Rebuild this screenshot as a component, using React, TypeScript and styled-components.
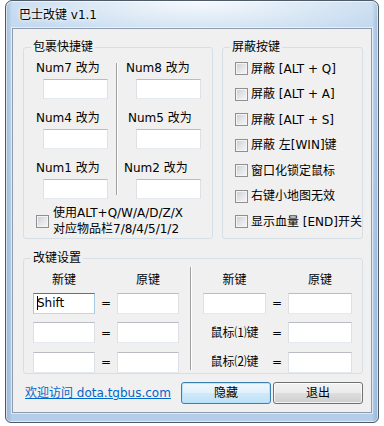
import styled, { createGlobalStyle } from 'styled-components';

const GlobalStyle = createGlobalStyle`
  html, body {
    margin: 0;
    padding: 0;
    background: #ffffff;
  }
  body {
    font-family: "DejaVu Sans", "Noto Sans CJK SC", sans-serif;
    font-size: 12px;
    color: #000000;
  }
`;

const Screen = styled.div`
  width: 384px;
  height: 426px;
  overflow: hidden;
  background: #ffffff;
`;

const Window = styled.div`
  box-sizing: border-box;
  margin-left: 5px;
  width: 374px;
  height: 423px;
  display: flex;
  flex-direction: column;
  padding: 0 6px 9px 6px;
  border: 1px solid #4f5a68;
  border-radius: 7px 7px 6px 6px;
  background:
    radial-gradient(ellipse 55% 40px at 52% 0%, rgba(255, 255, 255, 0.85), rgba(255, 255, 255, 0) 100%),
    linear-gradient(90deg, rgba(90, 130, 180, 0.35) 0px, rgba(90, 130, 180, 0) 6px, rgba(90, 130, 180, 0) 366px, rgba(90, 130, 180, 0.35) 372px),
    linear-gradient(180deg, #c6dbf0 0%, #b9d1ea 60%, #b4cde8 100%);
  box-shadow: inset 0 0 0 1px rgba(255, 255, 255, 0.6);
`;

const TitleBar = styled.div`
  height: 27px;
  display: flex;
  align-items: center;
  padding-left: 7px;
  font-size: 12px;
  line-height: 14px;
  text-shadow: 0 0 6px #ffffff, 0 0 3px #ffffff;
`;

const Client = styled.div`
  box-sizing: border-box;
  width: 360px;
  height: 385px;
  display: flex;
  flex-direction: column;
  padding: 11px 8px 0 10px;
  border: 1px solid #8e9cae;
  background: #f0f0f0;
  box-shadow: 0 0 0 1px rgba(255, 255, 255, 0.55);
`;

const TopRow = styled.div`
  display: flex;
  gap: 9px;
`;

const Group = styled.fieldset<{ $width: number; $height: number }>`
  box-sizing: border-box;
  width: ${(p) => p.$width}px;
  height: ${(p) => p.$height}px;
  margin: 0;
  padding: 0;
  min-width: 0;
  border: 1px solid #d5dfe5;
  border-radius: 3px;
`;

const Legend = styled.legend`
  margin-left: 7px;
  padding: 0 2px;
  font-size: 12px;
  line-height: 14px;
`;

const Columns = styled.div`
  display: flex;
  align-items: flex-start;
`;

const KeyColumn = styled.div<{ $width: number }>`
  width: ${(p) => p.$width}px;
  display: flex;
  flex-direction: column;
  gap: 12px;
  padding-top: 7px;
`;

const KeyCell = styled.div`
  display: flex;
  flex-direction: column;
  gap: 4px;
`;

const KeyLabel = styled.div<{ $indent: number }>`
  padding-left: ${(p) => p.$indent}px;
  line-height: 14px;
  white-space: nowrap;
`;

const TextBox = styled.div<{ $width: number; $height: number; $focused?: boolean }>`
  box-sizing: border-box;
  width: ${(p) => p.$width}px;
  height: ${(p) => p.$height}px;
  display: flex;
  align-items: center;
  padding-left: 3px;
  background: #ffffff;
  border: 1px solid;
  border-color: ${(p) =>
    p.$focused ? '#3d7bad #a4c9e3 #b7d9ed #a4c9e3' : '#b9bdc3 #dde1e6 #e3e9ef #dde1e6'};
  line-height: 14px;
`;

const KeyBox = styled(TextBox)`
  margin-left: 19px;
`;

const Caret = styled.span`
  display: inline-block;
  width: 1px;
  height: 14px;
  margin-right: -1px;
  background: #000000;
`;

const VDivider = styled.div<{ $top: number; $height: number }>`
  width: 1px;
  height: ${(p) => p.$height}px;
  margin-top: ${(p) => p.$top}px;
  background: #a0a0a0;
  box-shadow: 1px 0 0 #ffffff;
`;

const Check = styled.span`
  box-sizing: border-box;
  flex: none;
  width: 13px;
  height: 13px;
  border: 1px solid #8f8f8f;
  background: linear-gradient(135deg, #c8ccd2 0%, #e6e7e9 55%, #f6f6f6 100%);
  box-shadow: inset 0 0 0 1px #f4f4f4;
`;

const BagCheckRow = styled.div`
  display: flex;
  align-items: center;
  gap: 4px;
  margin-top: 6px;
  padding-left: 12px;
`;

const TwoLines = styled.div`
  line-height: 16px;
  white-space: nowrap;
`;

const BlockList = styled.div`
  display: flex;
  flex-direction: column;
  padding-top: 2px;
  overflow: hidden;
`;

const BlockRow = styled.div`
  height: 25.5px;
  display: flex;
  align-items: center;
  gap: 3px;
  padding-left: 12px;
  line-height: 14px;
  white-space: nowrap;
`;

const MapRow = styled.div`
  display: flex;
  align-items: flex-start;
  padding-top: 5px;
`;

const MapHalf = styled.div<{ $left: number; $cols: string }>`
  margin-left: ${(p) => p.$left}px;
  display: grid;
  grid-template-columns: ${(p) => p.$cols};
  grid-template-rows: 14px repeat(3, 21px);
  row-gap: 8.5px;
  align-items: center;
  & > :nth-child(-n + 3) {
    margin-bottom: -5.5px;
  }
`;

const Cell = styled.div`
  text-align: center;
  line-height: 14px;
  white-space: nowrap;
`;

const Footer = styled.div`
  display: flex;
  align-items: center;
  margin-top: 8px;
  padding-left: 2px;
`;

const Link = styled.a`
  color: #0066cc;
  text-decoration: underline;
  line-height: 14px;
  white-space: nowrap;
`;

const Buttons = styled.div`
  margin-left: auto;
  display: flex;
  gap: 2px;
`;

const Button = styled.div<{ $default?: boolean }>`
  box-sizing: border-box;
  width: 90px;
  height: 22px;
  display: flex;
  align-items: center;
  justify-content: center;
  border-radius: 3px;
  border: 1px solid ${(p) => (p.$default ? '#3c7fb1' : '#707070')};
  background: ${(p) =>
    p.$default
      ? 'linear-gradient(180deg, #eef7fd 0%, #e1f1fc 48%, #cfe9fa 52%, #bfe1f7 100%)'
      : 'linear-gradient(180deg, #f2f2f2 0%, #ebebeb 48%, #dddddd 52%, #cfcfcf 100%)'};
  box-shadow: inset 0 0 0 1px ${(p) => (p.$default ? 'rgba(180, 225, 250, 0.9)' : 'rgba(255, 255, 255, 0.75)')};
  line-height: 14px;
`;

const bagKeys = [
  [
    { label: 'Num7 改为', indent: 12 },
    { label: 'Num4 改为', indent: 12 },
    { label: 'Num1 改为', indent: 12 },
  ],
  [
    { label: 'Num8 改为', indent: 9 },
    { label: 'Num5 改为', indent: 11 },
    { label: 'Num2 改为', indent: 7 },
  ],
];

const blockedKeys = [
  '屏蔽 [ALT + Q]',
  '屏蔽 [ALT + A]',
  '屏蔽 [ALT + S]',
  '屏蔽 左[WIN]键',
  '窗口化锁定鼠标',
  '右键小地图无效',
  '显示血量 [END]开关',
];

export default function App() {
  return (
    <Screen>
      <GlobalStyle />
      <Window>
        <TitleBar>巴士改键 v1.1</TitleBar>
        <Client>
          <TopRow>
            <Group $width={190} $height={199}>
              <Legend>包裹快捷键</Legend>
              <Columns>
                <KeyColumn $width={92}>
                  {bagKeys[0].map((k) => (
                    <KeyCell key={k.label}>
                      <KeyLabel $indent={k.indent}>{k.label}</KeyLabel>
                      <KeyBox $width={65} $height={20} />
                    </KeyCell>
                  ))}
                </KeyColumn>
                <VDivider $top={9} $height={132} />
                <KeyColumn $width={95}>
                  {bagKeys[1].map((k) => (
                    <KeyCell key={k.label}>
                      <KeyLabel $indent={k.indent}>{k.label}</KeyLabel>
                      <KeyBox $width={65} $height={20} />
                    </KeyCell>
                  ))}
                </KeyColumn>
              </Columns>
              <BagCheckRow>
                <Check />
                <TwoLines>
                  使用ALT+Q/W/A/D/Z/X
                  <br />
                  对应物品栏7/8/4/5/1/2
                </TwoLines>
              </BagCheckRow>
            </Group>
            <Group $width={141} $height={199}>
              <Legend>屏蔽按键</Legend>
              <BlockList>
                {blockedKeys.map((t) => (
                  <BlockRow key={t}>
                    <Check />
                    <span>{t}</span>
                  </BlockRow>
                ))}
              </BlockList>
            </Group>
          </TopRow>
          <Group $width={340} $height={123} style={{ marginTop: 12 }}>
            <Legend>改键设置</Legend>
            <MapRow>
              <MapHalf $left={9} $cols="62px 22px 62px">
                <Cell>新键</Cell>
                <Cell />
                <Cell>原键</Cell>
                <TextBox $width={62} $height={21} $focused>
                  <Caret />
                  Shift
                </TextBox>
                <Cell>=</Cell>
                <TextBox $width={62} $height={21} />
                <TextBox $width={62} $height={21} />
                <Cell>=</Cell>
                <TextBox $width={62} $height={21} />
                <TextBox $width={62} $height={21} />
                <Cell>=</Cell>
                <TextBox $width={62} $height={21} />
              </MapHalf>
              <VDivider $top={-3} $height={103} style={{ marginLeft: 11 }} />
              <MapHalf $left={12} $cols="63px 22px 64px">
                <Cell>新键</Cell>
                <Cell />
                <Cell>原键</Cell>
                <TextBox $width={63} $height={21} />
                <Cell>=</Cell>
                <TextBox $width={64} $height={21} />
                <Cell>鼠标⑴键</Cell>
                <Cell>=</Cell>
                <TextBox $width={64} $height={21} />
                <Cell>鼠标⑵键</Cell>
                <Cell>=</Cell>
                <TextBox $width={64} $height={21} />
              </MapHalf>
            </MapRow>
          </Group>
          <Footer>
            <Link>欢迎访问 dota.tgbus.com</Link>
            <Buttons>
              <Button $default>隐藏</Button>
              <Button>退出</Button>
            </Buttons>
          </Footer>
        </Client>
      </Window>
    </Screen>
  );
}
